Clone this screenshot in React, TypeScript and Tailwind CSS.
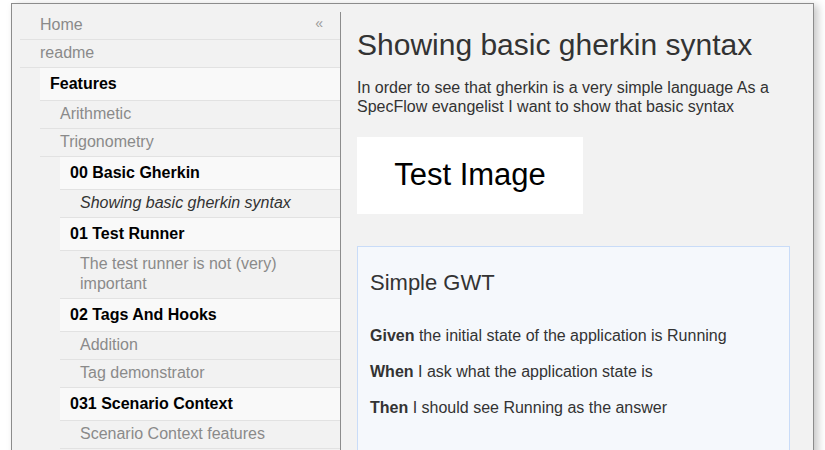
const font = { fontFamily: '"Liberation Sans", Arial, sans-serif' };

type NavItem = {
  label: string;
  kind: "leaf" | "folder" | "active";
  indent: 0 | 1 | 2;
};

const nav: NavItem[] = [
  { label: "Home", kind: "leaf", indent: 0 },
  { label: "readme", kind: "leaf", indent: 0 },
  { label: "Features", kind: "folder", indent: 1 },
  { label: "Arithmetic", kind: "leaf", indent: 1 },
  { label: "Trigonometry", kind: "leaf", indent: 1 },
  { label: "00 Basic Gherkin", kind: "folder", indent: 2 },
  { label: "Showing basic gherkin syntax", kind: "active", indent: 2 },
  { label: "01 Test Runner", kind: "folder", indent: 2 },
  { label: "The test runner is not (very) important", kind: "leaf", indent: 2 },
  { label: "02 Tags And Hooks", kind: "folder", indent: 2 },
  { label: "Addition", kind: "leaf", indent: 2 },
  { label: "Tag demonstrator", kind: "leaf", indent: 2 },
  { label: "031 Scenario Context", kind: "folder", indent: 2 },
  { label: "Scenario Context features", kind: "leaf", indent: 2 },
];

const indentClass = ["ml-0", "ml-5", "ml-10"];

function NavRow({ item }: { item: NavItem }) {
  const base = `${indentClass[item.indent]} border-b border-[#e2e2e2] text-base`;
  if (item.kind === "folder") {
    return (
      <li className={`${base} bg-[#f9f9f9] pl-[10px] pr-2 pt-[6px] pb-[7px] leading-[19px] font-bold text-black`}>
        {item.label}
      </li>
    );
  }
  return (
    <li
      className={`${base} pl-5 pr-8 pt-[3px] pb-[4px] leading-[20px] ${
        item.kind === "active" ? "italic text-[#333]" : "text-[#8a8a8a]"
      }`}
    >
      {item.label}
    </li>
  );
}

function Sidebar() {
  return (
    <aside className="relative mt-2 w-[329px] shrink-0 border-r border-[#8c8c8c] pl-2">
      <span className="absolute right-[17px] top-[1px] text-[14px] text-[#9a9a9a]">«</span>
      <ul>
        {nav.map((item) => (
          <NavRow key={item.label} item={item} />
        ))}
      </ul>
    </aside>
  );
}

export default function App() {
  return (
    <div className="h-[450px] overflow-hidden bg-white pl-[11px] pt-[3px]" style={font}>
      <div className="flex h-[460px] w-[803px] border border-[#8c8c8c] bg-[#f2f2f2] shadow-[4px_2px_8px_rgba(0,0,0,0.22)]">
        <Sidebar />
        <main className="min-w-0 flex-1 pl-4 pr-[23px] pt-6 text-[#333]">
          <h1 className="text-[30px] leading-[33px]">Showing basic gherkin syntax</h1>
          <p className="mt-[17px] text-base leading-[19px]">
            In order to see that gherkin is a very simple language As a SpecFlow evangelist I want to show that
            basic syntax
          </p>
          <div className="mt-[21px] flex h-[77px] w-[226px] items-center justify-center bg-white text-[31px] text-black">
            Test Image
          </div>
          <section className="mt-8 h-[260px] border border-[#c9dcf8] bg-[#f5f8fc] pl-3 pt-[23px]">
            <h2 className="text-[22px] leading-[25px]">Simple GWT</h2>
            <div className="mt-[31px] space-y-4 text-base leading-5">
              <p>
                <b>Given</b> the initial state of the application is Running
              </p>
              <p>
                <b>When</b> I ask what the application state is
              </p>
              <p>
                <b>Then</b> I should see Running as the answer
              </p>
            </div>
          </section>
        </main>
      </div>
    </div>
  );
}
